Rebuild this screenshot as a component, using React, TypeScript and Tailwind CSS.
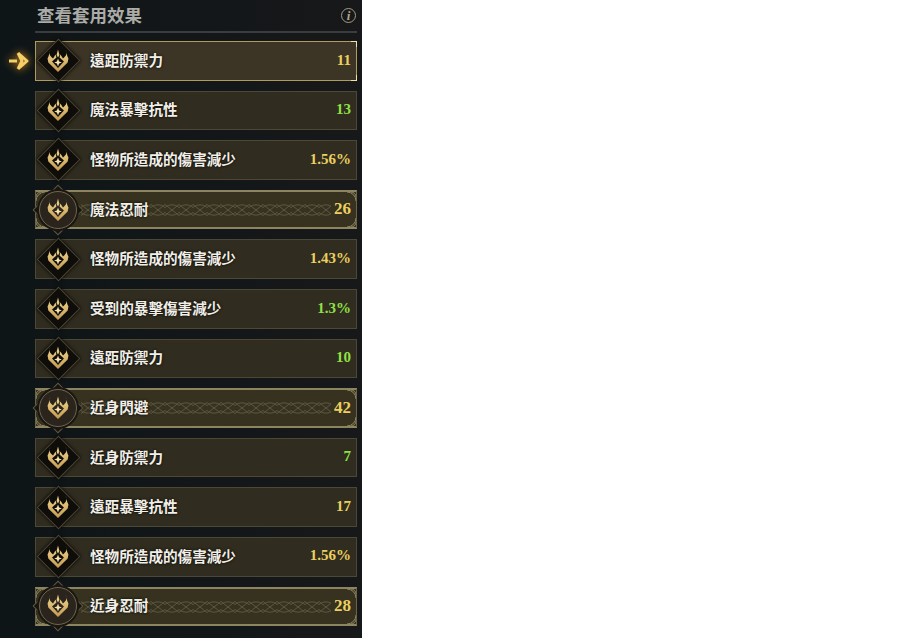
const rows = [
  { name: "遠距防禦力", value: "11", color: "text-[#ecd05f]", kind: "active" },
  { name: "魔法暴擊抗性", value: "13", color: "text-[#8fe045]", kind: "normal" },
  { name: "怪物所造成的傷害減少", value: "1.56%", color: "text-[#ecd05f]", kind: "normal" },
  { name: "魔法忍耐", value: "26", color: "text-[#ecd05f]", kind: "special" },
  { name: "怪物所造成的傷害減少", value: "1.43%", color: "text-[#ecd05f]", kind: "normal" },
  { name: "受到的暴擊傷害減少", value: "1.3%", color: "text-[#8fe045]", kind: "normal" },
  { name: "遠距防禦力", value: "10", color: "text-[#8fe045]", kind: "normal" },
  { name: "近身閃避", value: "42", color: "text-[#ecd05f]", kind: "special" },
  { name: "近身防禦力", value: "7", color: "text-[#8fe045]", kind: "normal" },
  { name: "遠距暴擊抗性", value: "17", color: "text-[#ecd05f]", kind: "normal" },
  { name: "怪物所造成的傷害減少", value: "1.56%", color: "text-[#ecd05f]", kind: "normal" },
  { name: "近身忍耐", value: "28", color: "text-[#ecd05f]", kind: "special" },
];

const hornPath =
  "M3 1C1.5 4.5 2.5 7 5.5 9.5L7.8 5.5 8.6 8.5 4.6 12.5 10 19V23L1.2 13.5 .5 9.5C2 7 2 4 3 1Z";

function Emblem() {
  return (
    <svg width="22" height="24" viewBox="0 0 20 24" preserveAspectRatio="none" className="relative" aria-hidden="true">
      <defs>
        <linearGradient id="gold" gradientUnits="userSpaceOnUse" x1="0" y1="0" x2="0" y2="24">
          <stop offset="0" stopColor="#f3d993" />
          <stop offset="1" stopColor="#c0974c" />
        </linearGradient>
      </defs>
      <path fill="url(#gold)" d={hornPath} />
      <path fill="url(#gold)" d={hornPath} transform="matrix(-1 0 0 1 20 0)" />
      <path fill="url(#gold)" d="M10 .5 11.3 6 10 8.5 8.7 6Z" />
      <path fill="#f6e2a8" d="M10 9.5 11 12.5 13.5 13.5 11 14.5 10 17.5 9 14.5 6.5 13.5 9 12.5Z" />
    </svg>
  );
}

function Diamond() {
  return (
    <div className="absolute left-0 top-1/2 flex h-[44px] w-[44px] -translate-y-1/2 items-center justify-center">
      <div className="absolute h-[31px] w-[31px] rotate-45 border border-[#4b4534] bg-[#0f0d0a] shadow-[0_0_4px_#000]" />
      <Emblem />
    </div>
  );
}

function Medal() {
  return (
    <div className="absolute left-0 top-1/2 flex h-[44px] w-[44px] -translate-y-1/2 items-center justify-center">
      <div className="absolute h-[36px] w-[36px] rotate-45 border border-[#5f5942] bg-[#17140f]" />
      <div className="absolute h-[38px] w-[38px] rounded-full border border-[#6f674c] bg-[#2a241d] shadow-[0_0_0_2px_#1a1712]" />
      <Emblem />
    </div>
  );
}

function Knots() {
  return (
    <svg className="absolute left-[45px] top-[11px] h-[14px] w-[250px]" aria-hidden="true">
      <defs>
        <pattern id="knot" width="14" height="14" patternUnits="userSpaceOnUse">
          <path
            d="M0 1.5 14 12.5M0 12.5 14 1.5M0 4.5C4 1 10 1 14 4.5M0 9.5C4 13 10 13 14 9.5"
            fill="none"
            stroke="#5c5640"
            strokeWidth="1"
          />
        </pattern>
      </defs>
      <rect width="100%" height="100%" fill="url(#knot)" />
    </svg>
  );
}

function Corner({ className }: { className: string }) {
  return (
    <svg width="10" height="10" viewBox="0 0 10 10" className={`absolute ${className}`} aria-hidden="true">
      <path d="M0 9A9 9 0 0 1 9 0M0 5A5 5 0 0 1 5 0" fill="none" stroke="#8f8660" strokeWidth="1" />
    </svg>
  );
}

function Row({ name, value, color, kind }: { name: string; value: string; color: string; kind: string }) {
  const box =
    kind === "active"
      ? "border border-[#b09a5c] bg-[#3c3525]"
      : kind === "special"
        ? "border-y-2 border-x border-y-[#8d8460] border-x-[#6b6448] bg-[#36321f]"
        : "border border-[#4b4836] bg-[#302c1f]";
  return (
    <div className={`relative flex h-[39.6px] items-center justify-between pb-[2px] pl-[54px] pr-[5px] ${box}`}>
      {kind === "special" && <Knots />}
      {kind === "special" && (
        <>
          <Corner className="left-0 top-0" />
          <Corner className="right-0 top-0 rotate-90" />
          <Corner className="right-0 bottom-0 rotate-180" />
          <Corner className="left-0 bottom-0 -rotate-90" />
        </>
      )}
      {kind === "special" ? <Medal /> : <Diamond />}
      <span className="relative text-[14.6px] font-bold text-[#f1efe8] [text-shadow:0_0_3px_#000]">{name}</span>
      <span
        className={`relative font-['Liberation_Serif',serif] font-bold ${color} ${kind === "special" ? "mt-[1px] text-[17px]" : "text-[15px]"}`}
      >
        {value}
      </span>
      {kind === "active" && (
        <>
          <div className="absolute right-[-1px] top-[-1px] h-[6px] w-[6px] border-r border-t border-[#f0e2ad]" />
          <div className="absolute bottom-[-1px] right-[-1px] h-[6px] w-[6px] border-b border-r border-[#f0e2ad]" />
          <svg width="24" height="24" viewBox="0 0 24 24" className="absolute left-[-28px] top-[7px] drop-shadow-[0_0_4px_#e09a1c]" aria-hidden="true">
            <path d="M1 12H9M10 4 19 12 10 20M10 4 14 12 10 20" fill="none" stroke="#f7cf68" strokeWidth="3" strokeLinejoin="round" />
          </svg>
        </>
      )}
    </div>
  );
}

export default function App() {
  return (
    <main className="h-[638px] w-[900px] overflow-hidden bg-white font-['Noto_Sans_CJK_TC','Noto_Sans',sans-serif]">
      <div className="h-full w-[362px] bg-gradient-to-r from-[#0e1517] to-[#17181a] pl-[35px] pr-[5px]">
        <div className="flex h-[33px] items-center justify-between border-b-2 border-[#3b3d3c] pb-[1px] pl-[2px] pr-[1px]">
          <h1 className="text-[17.5px] font-bold text-[#ababa7]">查看套用效果</h1>
          <div className="flex h-[15px] w-[15px] items-center justify-center rounded-full border-[1.5px] border-[#a59c84] font-['Liberation_Serif',serif] text-[13px] font-bold italic leading-none text-[#b0a78e]">
            i
          </div>
        </div>
        <div className="mt-[8px] flex flex-col gap-[10px]">
          {rows.map((row, i) => (
            <Row key={i} {...row} />
          ))}
        </div>
      </div>
    </main>
  );
}
